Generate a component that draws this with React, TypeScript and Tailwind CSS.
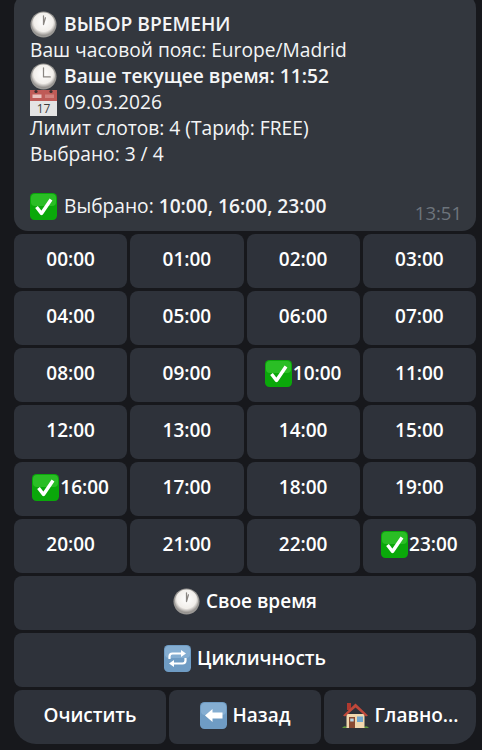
import React from 'react';

const ClockFace = ({ hand, size = 27 }: { hand: string; size?: number }) => (
  <svg width={size} height={size} viewBox="0 0 28 28" className="shrink-0">
    <defs>
      <radialGradient id="rim" cx="50%" cy="40%" r="60%">
        <stop offset="0%" stopColor="#ffffff" />
        <stop offset="70%" stopColor="#f1eeea" />
        <stop offset="100%" stopColor="#8f8b88" />
      </radialGradient>
    </defs>
    <circle cx="14" cy="14" r="13.5" fill="#9a9895" />
    <circle cx="14" cy="13.6" r="12" fill="url(#rim)" />
    <path d={hand} stroke="#8a8682" strokeWidth="1.3" fill="none" strokeLinecap="round" strokeLinejoin="round" />
  </svg>
);

const OneClock = ({ size }: { size?: number }) => <ClockFace size={size} hand="M14 14 L14 5 M14 14 L16 7" />;
const ThreeClock = () => <ClockFace hand="M14 5 L14 14.5 L21 14.5" />;

const Calendar = () => (
  <svg width="27" height="27" viewBox="0 0 27 27" className="shrink-0">
    <rect x="0" y="1" width="27" height="26" fill="#e4e4e4" />
    <rect x="0" y="1" width="27" height="11" fill="#bf5b57" />
    <circle cx="6" cy="2.5" r="1.6" fill="#3c3030" />
    <circle cx="21" cy="2.5" r="1.6" fill="#3c3030" />
    <rect x="2.5" y="5.5" width="9" height="3.5" fill="#e9c4c0" />
    <rect x="15" y="5.5" width="9" height="3.5" fill="#d0827e" />
    <text x="13.5" y="24" textAnchor="middle" fontSize="12" fill="#3d3d3d" fontFamily="'Open Sans', sans-serif">17</text>
  </svg>
);

const Check = ({ size = 27 }: { size?: number }) => (
  <svg width={size} height={size} viewBox="0 0 27 27" className="shrink-0">
    <rect x="0" y="0" width="27" height="27" rx="4.5" fill="#0aa80a" />
    <rect x="1" y="1" width="25" height="12" rx="4" fill="#46cf3c" opacity="0.55" />
    <path d="M6.5 14 L11.5 20.5 L21 6.5" stroke="#ffffff" strokeWidth="3.4" fill="none" strokeLinejoin="round" />
  </svg>
);

const Repeat = () => (
  <svg width="27" height="27" viewBox="0 0 27 27" className="shrink-0">
    <rect width="27" height="27" rx="4.5" fill="#6f9cc4" />
    <rect x="1" y="1" width="25" height="12" rx="4" fill="#8fb6d8" opacity="0.7" />
    <path d="M5.5 14 V11.5 a3 3 0 0 1 3 -3 H18 M21.5 13 V15.5 a3 3 0 0 1 -3 3 H9" stroke="#fff" strokeWidth="2.2" fill="none" />
    <path d="M17 5 L22 8.5 L17 12 Z M10 15 L5 18.5 L10 22 Z" fill="#fff" />
  </svg>
);

const BackArrow = () => (
  <svg width="27" height="27" viewBox="0 0 27 27" className="shrink-0">
    <rect width="27" height="27" rx="4.5" fill="#6f9cc4" />
    <rect x="1" y="1" width="25" height="12" rx="4" fill="#8fb6d8" opacity="0.7" />
    <path d="M5 13.5 L12.5 7 V10.5 H22.5 V16.5 H12.5 V20 Z" fill="#fff" />
  </svg>
);

const House = () => (
  <svg width="27" height="27" viewBox="0 0 27 27" className="shrink-0">
    <path d="M0 26 Q2 23 5 25 L22 25 Q25 23 27 26 Z" fill="#5e9a3a" />
    <rect x="5" y="1" width="4" height="7" fill="#b0392f" />
    <rect x="4.5" y="12" width="18" height="14" fill="#f0d7ae" />
    <path d="M13.5 1.5 L26 13.5 L24 14.5 L13.5 5.5 L3 14.5 L1 13.5 Z" fill="#c0483a" />
    <rect x="7" y="15" width="6" height="11" fill="#8a4a32" />
    <rect x="8.2" y="16.5" width="3.5" height="3" fill="#b9d4e2" />
    <rect x="15" y="14.5" width="6" height="5.5" fill="#6fa6cf" />
  </svg>
);

const Btn = ({ children, className = '' }: { children: React.ReactNode; className?: string }) => (
  <button className={`h-[54px] min-w-0 pb-[3px] flex items-center justify-center bg-[#2e323a] rounded-[8px] text-white text-[19px] font-semibold whitespace-nowrap ${className}`}>
    {children}
  </button>
);

const times = [
  '00:00', '01:00', '02:00', '03:00',
  '04:00', '05:00', '06:00', '07:00',
  '08:00', '09:00', '10:00', '11:00',
  '12:00', '13:00', '14:00', '15:00',
  '16:00', '17:00', '18:00', '19:00',
  '20:00', '21:00', '22:00', '23:00',
];
const picked = ['10:00', '16:00', '23:00'];

export default function App() {
  return (
    <div className="w-[482px] h-[750px] overflow-hidden bg-[#17181c] pl-[14px] pr-[6px] text-white font-['Open_Sans',sans-serif]">
      <div className="relative -mt-[6px] bg-[#33373e] rounded-[14px] pl-[16px] pr-[14px] pt-[17px] pb-[12px] text-[19.2px] leading-[26px] text-[#f4f5f6]">
        <div className="flex items-center gap-[7px] h-[26px] font-semibold"><OneClock /> ВЫБОР ВРЕМЕНИ</div>
        <div>Ваш часовой пояс: Europe/Madrid</div>
        <div className="flex items-center gap-[7px] h-[26px] font-semibold"><ThreeClock /> Ваше текущее время: 11:52</div>
        <div className="flex items-center gap-[7px] h-[26px]"><Calendar /> 09.03.2026</div>
        <div>Лимит слотов: 4 (Тариф: FREE)</div>
        <div>Выбрано: 3 / 4</div>
        <div className="h-[26px]" />
        <div className="flex items-center gap-[7px] h-[26px]">
          <Check />
          <span>Выбрано: <b className="font-semibold">10:00, 16:00, 23:00</b></span>
        </div>
        <span className="absolute right-[14px] bottom-[6px] text-[18.5px] leading-[24px] text-[#6d747c]">13:51</span>
      </div>

      <div className="grid grid-cols-4 gap-[3px] mt-[3px]">
        {times.map((t) => (
          <Btn key={t} className="gap-[1px]">
            {picked.includes(t) && <Check />}
            {t}
          </Btn>
        ))}
      </div>

      <Btn className="w-full mt-[3px] gap-[6px]"><OneClock /> Свое время</Btn>
      <Btn className="w-full mt-[3px] gap-[6px]"><Repeat /> Цикличность</Btn>

      <div className="grid grid-cols-3 gap-[3px] mt-[3px]">
        <Btn className="rounded-bl-[22px]">Очистить</Btn>
        <Btn className="gap-[6px]"><BackArrow /> Назад</Btn>
        <Btn className="gap-[6px] rounded-br-[22px]"><House /> Главно...</Btn>
      </div>
    </div>
  );
}
